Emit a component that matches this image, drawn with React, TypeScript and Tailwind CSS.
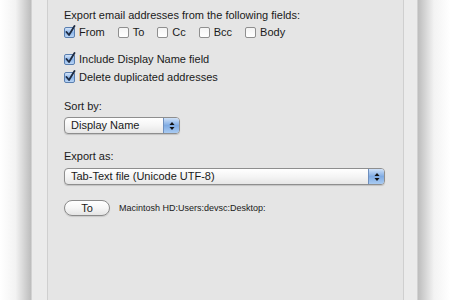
import type { ReactNode } from 'react'

const font = { fontFamily: '"Liberation Sans", Arial, sans-serif' }

function CheckBox({ checked }: { checked: boolean }) {
  return (
    <span className="relative inline-block w-[11px] h-[11px] shrink-0">
      <span
        className={`absolute inset-0 rounded-[2px] border ${
          checked
            ? 'border-[#5a7fb0] bg-gradient-to-b from-[#d4e4f8] via-[#8db6ea] to-[#b9d4f4]'
            : 'border-[#8f8f8f] bg-gradient-to-b from-[#f4f4f4] to-white'
        }`}
      />
      {checked && (
        <svg className="absolute left-[1px] top-[-2px]" width="11" height="12" viewBox="0 0 11 12">
          <path d="M1.5 7 L4 10 L9.5 1" fill="none" stroke="#1d2a40" strokeWidth="1.8" strokeLinecap="round" strokeLinejoin="round" />
        </svg>
      )}
    </span>
  )
}

function Check({ checked, children }: { checked: boolean; children: ReactNode }) {
  return (
    <div className="flex items-center h-[14px]">
      <CheckBox checked={checked} />
      <span className="ml-[4px] text-[11px] leading-[14px] text-[#1a1a1a]">{children}</span>
    </div>
  )
}

function PopUp({ label, width }: { label: string; width: string }) {
  return (
    <div
      className={`${width} h-[17px] flex rounded-[4px] border border-[#8e8e8e] bg-gradient-to-b from-white via-[#f5f5f5] to-[#e6e6e6] shadow-[0_1px_1px_rgba(0,0,0,0.15)] overflow-hidden`}
    >
      <span className="flex-1 pl-[6px] text-[11px] leading-[15px] text-[#1a1a1a]">{label}</span>
      <span className="w-[16px] flex items-center justify-center border-l border-[#6f8fbd] bg-gradient-to-b from-[#cfe1f7] via-[#7fabe3] to-[#a9cbf2]">
        <svg width="6" height="10" viewBox="0 0 6 10">
          <path d="M0.5 4 L3 1 L5.5 4 Z" fill="#111" />
          <path d="M0.5 6 L3 9 L5.5 6 Z" fill="#111" />
        </svg>
      </span>
    </div>
  )
}

export default function App() {
  return (
    <div className="w-[450px] h-[300px] flex bg-white overflow-hidden" style={font}>
      {/* left shadow */}
      <div className="w-[31px] h-full bg-gradient-to-r from-white via-[#f3f3f3] to-[#bdbdbd]" />

      {/* window */}
      <div className="w-[387px] h-full bg-[#ebebeb] border-l border-r border-[#d2d2d2] flex">
        <div className="w-[15px]" />
        <div className="w-[357px] h-full bg-[#e5e5e5] border-l border-r border-[#cfcfcf] pl-[16px] pt-[8px]">
          <div className="h-[14px] text-[11px] leading-[14px] text-[#1a1a1a]">
            Export email addresses from the following fields:
          </div>

          <div className="mt-[3px] flex gap-[13px]">
            <Check checked>From</Check>
            <Check checked={false}>To</Check>
            <Check checked={false}>Cc</Check>
            <Check checked={false}>Bcc</Check>
            <Check checked={false}>Body</Check>
          </div>

          <div className="mt-[13px]">
            <Check checked>Include Display Name field</Check>
          </div>
          <div className="mt-[4px]">
            <Check checked>Delete duplicated addresses</Check>
          </div>

          <div className="mt-[15px] h-[14px] text-[11px] leading-[14px] text-[#1a1a1a]">Sort by:</div>
          <div className="mt-[4px]">
            <PopUp label="Display Name" width="w-[116px]" />
          </div>

          <div className="mt-[15px] h-[14px] text-[11px] leading-[14px] text-[#1a1a1a]">Export as:</div>
          <div className="mt-[5px]">
            <PopUp label="Tab-Text file (Unicode UTF-8)" width="w-[321px]" />
          </div>

          <div className="mt-[14px] flex items-center h-[17px]">
            <button className="w-[46px] h-[16px] rounded-full border border-[#8a8a8a] bg-gradient-to-b from-white via-[#f6f6f6] to-[#e4e4e4] shadow-[0_1px_1px_rgba(0,0,0,0.12)] text-[11px] leading-[14px] text-[#1a1a1a]">
              To
            </button>
            <span className="ml-[9px] text-[9px] leading-[12px] text-[#1a1a1a]">
              Macintosh HD:Users:devsc:Desktop:
            </span>
          </div>
        </div>
      </div>

      {/* right shadow */}
      <div className="w-[32px] h-full bg-gradient-to-l from-white via-[#f3f3f3] to-[#bdbdbd]" />
    </div>
  )
}
